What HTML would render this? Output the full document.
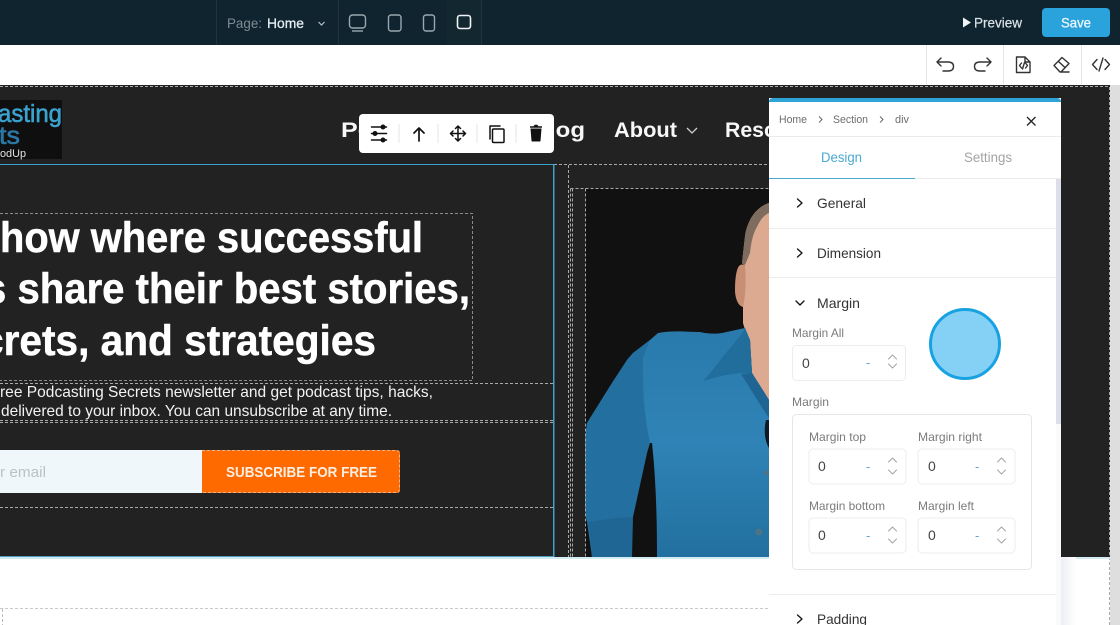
<!DOCTYPE html>
<html lang="en"><head><meta charset="utf-8"><title>Page editor</title>
<style>
html,body{margin:0;padding:0;width:1120px;height:625px;overflow:hidden;background:#fff}
svg{display:block;position:absolute;left:0;top:0}
text{font-family:"Liberation Sans",sans-serif}
.b{font-weight:700}
.d{fill:none;stroke:#a9a9a9;stroke-width:1;stroke-dasharray:3 2}
.ic{fill:none;stroke:#333;stroke-width:1.400;stroke-linecap:round;stroke-linejoin:round}
.k{fill:none;stroke:#111;stroke-width:1.300;stroke-linecap:round;stroke-linejoin:round}
.inp{fill:#fff;stroke:#ececec;stroke-width:1}
.st{fill:none;stroke:#a3a3a3;stroke-width:1;stroke-linecap:round;stroke-linejoin:round}
.lab{font-size:12px;fill:#7b7b7b}
.val{font-size:14px;fill:#444}
.dash{font-size:13px;fill:#5aa9c9}
.row{font-size:14px;fill:#333}
</style></head><body>
<svg width="1120" height="625" viewBox="0 0 1120 625" xmlns="http://www.w3.org/2000/svg">
<defs>
<linearGradient id="sh" x1="0" y1="0" x2="1" y2="0"><stop offset="0" stop-color="#edeef6"/><stop offset="1" stop-color="#fff"/></linearGradient>
<linearGradient id="shirt" x1="0" y1="0" x2="0" y2="1"><stop offset="0" stop-color="#2a7aac"/><stop offset=".5" stop-color="#2f83b6"/><stop offset="1" stop-color="#22709f"/></linearGradient>
</defs>

<!-- Top bar -->
<rect x="0" y="0" width="1120" height="45" fill="#10242f"/>
<rect x="216" y="0" width="1" height="45" fill="#1e3540"/>
<rect x="338" y="0" width="1" height="45" fill="#1e3540"/>
<rect x="481" y="0" width="1" height="45" fill="#1e3540"/>
<rect x="447" y="0" width="34" height="45" fill="#12272f"/>
<text x="227" y="28" font-size="14" fill="#7d8b93" textLength="35" lengthAdjust="spacingAndGlyphs">Page:</text>
<text x="267" y="28" font-size="14" fill="#e6eef2" stroke="#e6eef2" stroke-width=".3" textLength="37" lengthAdjust="spacingAndGlyphs">Home</text>
<path d="M318.500 22 L321.500 25 L324.500 22" fill="none" stroke="#b5c0c6" stroke-width="1.200"/>
<g fill="none" stroke="#9aa7ae" stroke-width="1.400">
<rect x="349.500" y="15" width="16" height="13" rx="3"/>
<path d="M352 31 H363"/>
<rect x="388.500" y="15" width="12.500" height="16" rx="2.500"/>
<rect x="423.500" y="15" width="11" height="16" rx="2.500"/>
</g>
<rect x="457.500" y="15.500" width="13" height="13" rx="2.500" fill="none" stroke="#eef3f5" stroke-width="1.600"/>
<path d="M963 17.500 L971 22.500 L963 27.500Z" fill="#f0f4f6"/>
<text x="974" y="27.500" font-size="14" fill="#dbe3e7" stroke="#dbe3e7" stroke-width=".2" textLength="48" lengthAdjust="spacingAndGlyphs">Preview</text>
<rect x="1042" y="8" width="68" height="29" rx="4" fill="#2aa3dc"/>
<text x="1061" y="27.500" font-size="14" fill="#e9f6fc" textLength="30" stroke="#e9f6fc" stroke-width=".3" lengthAdjust="spacingAndGlyphs">Save</text>

<!-- Secondary toolbar -->
<rect x="926" y="45" width="1" height="40" fill="#e6e6e6"/>
<rect x="1003" y="45" width="1" height="40" fill="#e6e6e6"/>
<rect x="1081" y="45" width="1" height="40" fill="#e6e6e6"/>
<g class="ic">
<path d="M941 58 L937 62 L941 66 M937 62 H948 Q953.500 62 953.500 66.500 Q953.500 71 948 71 H943"/>
<path d="M987 58 L991 62 L987 66 M991 62 H980 Q974.500 62 974.500 66.500 Q974.500 71 980 71 H985"/>
<path d="M1016.500 57 H1025 L1030 62 V72.500 H1016.500 Z M1025 57 V62 H1030"/>
<path d="M1021.500 63 L1019.500 65.500 L1021.500 68 M1025.500 63 L1027.500 65.500 L1025.500 68 M1024.500 62.500 L1022.500 69"/>
<path d="M1054 65.500 L1062 57.500 L1069 63.500 L1061 72 H1060 Z M1058.500 61.500 L1065 67.500 M1060 72 H1069"/>
<path d="M1097 59.500 L1092.500 64.500 L1097 69.500 M1105 59.500 L1109.500 64.500 L1105 69.500 M1103 58 L1099 71"/>
</g>

<!-- Canvas -->
<rect x="0" y="85" width="1110" height="472" fill="#222222"/>
<rect x="1110" y="85" width="10" height="540" fill="#dedede"/>
<path class="d" d="M0 86.500 H1109.500 V625" stroke="#b5b5b5"/>

<!-- Logo -->
<rect x="0" y="100" width="62" height="59" fill="#0f0f0f"/>
<text x="-2" y="122" font-size="25" fill="#3ba2cf" stroke="#3ba2cf" stroke-width=".6" textLength="64" lengthAdjust="spacingAndGlyphs">asting</text>
<text x="-1" y="144" font-size="25" fill="#2b78a5" stroke="#2b78a5" stroke-width=".6" textLength="21" lengthAdjust="spacingAndGlyphs">ts</text>
<text x="0" y="157" font-size="11" fill="#e3e3e3" textLength="26" lengthAdjust="spacingAndGlyphs">odUp</text>

<!-- Nav -->
<text x="341" y="137" font-size="21" class="b" fill="#f7f7f7" textLength="32" lengthAdjust="spacingAndGlyphs">Po</text>
<text x="549" y="137" font-size="21" class="b" fill="#f7f7f7" textLength="36" lengthAdjust="spacingAndGlyphs">log</text>
<text x="614" y="137" font-size="21" class="b" fill="#f7f7f7" textLength="63" lengthAdjust="spacingAndGlyphs">About</text>
<path d="M687 128 L692 133 L697 128" fill="none" stroke="#cfcfcf" stroke-width="1.300"/>
<text x="725" y="137" font-size="21" class="b" fill="#f7f7f7" textLength="52" lengthAdjust="spacingAndGlyphs">Reso</text>

<!-- Person image -->
<rect x="585" y="188" width="184" height="369" fill="#111111"/>
<!-- head and neck -->
<path d="M769 203 C757 207 748 218 745 236 L742 263 L745 266 L743 307 L743 323 C745 331 748 336 750 340 L752 373 L769 400 V203Z" fill="#dcaa90"/>
<path d="M769 203 C757 207 748 218 745 236 L742 263 L745 265 L750 253 C751 243 753 233 757 227 C760 220 764 215 769 213Z" fill="#7e6c5e"/>
<path d="M739 266 C736 270 735 280 735 290 C735 298 738 306 743 307 C746 295 746 275 745 266 C743 264 741 264 739 266Z" fill="#c88f75"/>
<!-- shirt -->
<path d="M658 333 C672 330 690 332 700 332 C708 334 716 334 722 333 L745 328 L750 340 L752 373 L769 400 V557 H592 C591 545 590 532 587 522 C585 515 585 505 585 500 L585 447 C585 438 586 430 587 423 L612 383 L627 360 L633 353 L650 340Z" fill="url(#shirt)"/>
<!-- arm tone -->
<path d="M650 340 L633 353 L627 360 L612 383 L587 423 L585 447 V500 L587 522 L592 557 H632 L633 517 L647 453 L650 443 C645 420 642 390 643 357Z" fill="#236f9f"/>
<!-- forearm cuff -->
<path d="M587 522 C603 520 620 517 633 517 L632 557 H592 C591 545 590 532 587 522Z" fill="#1f6695"/>
<!-- gap between arm and body -->
<path d="M652 443 L650 443 L647 453 L633 517 L632 557 H657 C657 520 656 480 652 443Z" fill="#111"/>
<!-- collar -->
<path d="M703 381 C716 377 728 374 741 373 L752 373 L750 340 L745 328 C740 338 732 345 722 358 C715 367 708 376 703 381Z" fill="#216d9c"/>
<path d="M752 373 L769 400 V418 C760 405 750 388 741 374Z" fill="#1f6594"/>
<path d="M766 420 C764 428 764 440 769 448 V420Z" fill="#101a26"/>
<circle cx="766" cy="473" r="2.500" fill="#4d7486"/><circle cx="759" cy="532" r="3.500" fill="#4d7486"/>

<!-- Dashed guides -->
<path class="d" d="M554 164.500 H768"/>
<path class="d" d="M568.500 165 V557"/>
<path class="d" d="M570.500 188.500 V557"/>
<path class="d" d="M572.500 188.500 V557"/>
<path class="d" d="M570.500 188.500 H769"/>
<path class="d" d="M585.500 188.500 V557"/>
<path class="d" d="M0 213.500 H472.500 V380.500 H0" style="stroke:#8c8c8c"/>
<path class="d" d="M0 383.500 H553"/>
<path class="d" d="M0 420.500 H553"/>
<path class="d" d="M0 422.500 H553"/>
<path class="d" d="M0 507.500 H553"/>

<!-- Headline -->
<text x="0" y="252" font-size="43" class="b" fill="#fff" stroke="#fff" stroke-width=".5" textLength="423" lengthAdjust="spacingAndGlyphs">how where successful</text>
<text x="-16" y="303" font-size="43" class="b" fill="#fff" stroke="#fff" stroke-width=".5" textLength="486" lengthAdjust="spacingAndGlyphs">s share their best stories,</text>
<text x="-19" y="355" font-size="43" class="b" fill="#fff" stroke="#fff" stroke-width=".5" textLength="395" lengthAdjust="spacingAndGlyphs">crets, and strategies</text>
<text x="0" y="397" font-size="16" fill="#f2f2f2" textLength="433" lengthAdjust="spacingAndGlyphs">ree Podcasting Secrets newsletter and get podcast tips, hacks,</text>
<text x="1" y="416" font-size="16" fill="#f2f2f2" textLength="391" lengthAdjust="spacingAndGlyphs">delivered to your inbox. You can unsubscribe at any time.</text>

<!-- Form -->
<rect x="0" y="450" width="202" height="43" fill="#eff7fa"/>
<text x="0" y="477" font-size="15" fill="#b9c3c6" textLength="46" lengthAdjust="spacingAndGlyphs">r email</text>
<path d="M202 450 H397 Q400 450 400 453 V490 Q400 493 397 493 H202Z" fill="#ff6a00"/>
<path d="M202 450.500 H396 Q399.500 450.500 399.500 454 V489 Q399.500 492.500 396 492.500 H202" fill="none" stroke="#e8b58f" stroke-width="1" stroke-dasharray="3 2"/>
<text x="226" y="477" font-size="15" class="b" fill="#fbeee3" textLength="151" lengthAdjust="spacingAndGlyphs">SUBSCRIBE FOR FREE</text>

<!-- Selection border -->
<rect x="0" y="164" width="554" height="1" fill="#3ba3cf"/>
<rect x="553" y="164" width="1.500" height="393" fill="#3ba3cf"/>
<rect x="0" y="556" width="554" height="1" fill="#4d9bbd"/>

<!-- Below canvas -->
<rect x="0" y="557" width="1110" height="2" fill="#d3ecf4"/>
<path d="M0 608.500 H769" fill="none" stroke="#c9c9c9" stroke-dasharray="3 2"/>
<path d="M2.500 609 V625" fill="none" stroke="#bbb" stroke-dasharray="3 2"/>
<rect x="1061" y="557" width="15" height="68" fill="url(#sh)"/>

<!-- Floating toolbar -->
<rect x="359" y="114" width="195" height="39" rx="4" fill="#fff"/>
<g fill="#e6e6e6"><rect x="398.500" y="124" width="1" height="19"/><rect x="437.500" y="124" width="1" height="19"/><rect x="476.500" y="124" width="1" height="19"/><rect x="515.500" y="124" width="1" height="19"/></g>
<g stroke="#111" stroke-width="1.500" fill="none" stroke-linecap="round" stroke-linejoin="round">
<path d="M371.500 127 H386.500 M371.500 133.500 H386.500 M371.500 140 H386.500"/>
<path d="M419 141 V128 M414 133 L419 128 L424 133" stroke-width="1.700"/>
<path d="M458 126 V141 M450.500 133.500 H465.500 M455.500 128.500 L458 126 L460.500 128.500 M455.500 138.500 L458 141 L460.500 138.500 M453 131 L450.500 133.500 L453 136 M463 131 L465.500 133.500 L463 136"/>
<path d="M490 139 V126 H500"/>
<rect x="492.500" y="129" width="11.500" height="13.500" rx="1"/>
</g>
<circle cx="383" cy="127" r="2.500" fill="#111"/><circle cx="375" cy="133.500" r="2.500" fill="#111"/><circle cx="383" cy="140" r="2.500" fill="#111"/>
<path d="M530.500 128.500 H541.500 V128.500 L540.500 141 Q540.300 141.500 539.500 141.500 H532.500 Q531.700 141.500 531.500 141 Z" fill="#111"/>
<path d="M530 127 H542 M534 127 L535 125.500 H537 L538 127" stroke="#111" stroke-width="1.500" fill="none"/>

<!-- Panel -->
<rect x="769" y="98" width="292" height="527" fill="#fff"/>
<path d="M769 102 Q769 98 773 98 H1057 Q1061 98 1061 102 Z" fill="#2da3d6"/>
<text x="779" y="123" font-size="11" fill="#6d6d6d" textLength="28" lengthAdjust="spacingAndGlyphs">Home</text>
<path d="M819 116.500 L822 119.500 L819 122.500 M880 116.500 L883 119.500 L880 122.500" fill="none" stroke="#666" stroke-width="1"/>
<text x="833" y="123" font-size="11" fill="#6d6d6d" textLength="35" lengthAdjust="spacingAndGlyphs">Section</text>
<text x="895" y="123" font-size="11" fill="#6d6d6d" textLength="14" lengthAdjust="spacingAndGlyphs">div</text>
<path d="M1027 117 L1035.500 125.500 M1035.500 117 L1027 125.500" stroke="#222" stroke-width="1.300" fill="none"/>
<rect x="769" y="136" width="292" height="1" fill="#ebebeb"/>
<text x="821" y="162" font-size="14" fill="#4aa9d0" textLength="41" lengthAdjust="spacingAndGlyphs">Design</text>
<text x="964" y="162" font-size="14" fill="#a3a3a3" textLength="48" lengthAdjust="spacingAndGlyphs">Settings</text>
<rect x="769" y="178" width="292" height="1" fill="#ebebeb"/>
<rect x="769" y="178" width="146" height="1" fill="#4aa9d0"/>
<rect x="1056" y="179" width="5" height="245" fill="#dcdee9"/>
<rect x="1056" y="424" width="5" height="201" fill="#fafafc"/>

<path d="M797.500 199 L802 203 L797.500 207 M797.500 249 L802 253 L797.500 257" class="k"/>
<text x="817" y="208" class="row" textLength="49" lengthAdjust="spacingAndGlyphs">General</text>
<rect x="769" y="228" width="287" height="1" fill="#ececec"/>
<text x="817" y="258" class="row" textLength="64" lengthAdjust="spacingAndGlyphs">Dimension</text>
<rect x="769" y="277" width="287" height="1" fill="#ececec"/>
<path d="M796 301 L800 305 L804 301" class="k"/>
<text x="817" y="308" class="row" textLength="43" lengthAdjust="spacingAndGlyphs">Margin</text>

<text x="792" y="337" class="lab" textLength="52" lengthAdjust="spacingAndGlyphs">Margin All</text>
<rect x="792.500" y="345.500" width="113" height="35" rx="4" class="inp"/>
<text x="802" y="368" class="val">0</text>
<text x="866" y="367" class="dash">-</text>
<path class="st" d="M888.500 359 L892.500 355 L896.500 359 M888.500 364 L892.500 368 L896.500 364"/>
<circle cx="965" cy="344" r="34.500" fill="#85d1f5" stroke="#18a2e2" stroke-width="3"/>

<text x="792" y="406" class="lab" textLength="37" lengthAdjust="spacingAndGlyphs">Margin</text>
<rect x="792.500" y="414.500" width="239" height="155" rx="4" fill="#fff" stroke="#e6e6e6"/>

<text x="809" y="441" class="lab" textLength="57" lengthAdjust="spacingAndGlyphs">Margin top</text>
<text x="918" y="441" class="lab" textLength="64" lengthAdjust="spacingAndGlyphs">Margin right</text>
<text x="809" y="510" class="lab" textLength="76" lengthAdjust="spacingAndGlyphs">Margin bottom</text>
<text x="918" y="510" class="lab" textLength="56" lengthAdjust="spacingAndGlyphs">Margin left</text>

<rect x="809" y="449" width="97" height="35" rx="4" class="inp"/>
<rect x="918" y="449" width="97" height="35" rx="4" class="inp"/>
<rect x="809" y="518" width="97" height="35" rx="4" class="inp"/>
<rect x="918" y="518" width="97" height="35" rx="4" class="inp"/>
<text x="818" y="471" class="val">0</text><text x="928" y="471" class="val">0</text>
<text x="818" y="540" class="val">0</text><text x="928" y="540" class="val">0</text>
<text x="866" y="471" class="dash">-</text><text x="975" y="471" class="dash">-</text>
<text x="866" y="540" class="dash">-</text><text x="975" y="540" class="dash">-</text>
<path class="st" d="M888.500 462 L892.500 458 L896.500 462 M888.500 470 L892.500 474 L896.500 470"/>
<path class="st" d="M997.500 462 L1001.500 458 L1005.500 462 M997.500 470 L1001.500 474 L1005.500 470"/>
<path class="st" d="M888.500 531 L892.500 527 L896.500 531 M888.500 539 L892.500 543 L896.500 539"/>
<path class="st" d="M997.500 531 L1001.500 527 L1005.500 531 M997.500 539 L1001.500 543 L1005.500 539"/>

<rect x="769" y="594" width="287" height="1" fill="#ececec"/>
<path d="M797.500 615 L802 619 L797.500 623" class="k"/>
<text x="817" y="624" class="row" textLength="50" lengthAdjust="spacingAndGlyphs">Padding</text>
</svg>
</body></html>
